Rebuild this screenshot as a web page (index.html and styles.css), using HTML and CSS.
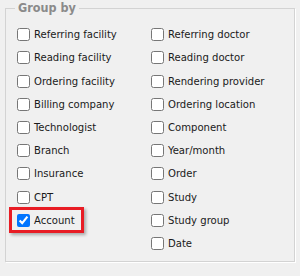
FILE: index.html
```html
<!DOCTYPE html>
<html>
<head>
<meta charset="utf-8">
<link rel="stylesheet" href="styles.css">
</head>
<body>
<fieldset class="group">
  <legend class="group-title">Group by</legend>
  <div class="options">
    <label class="opt"><input type="checkbox"><span>Referring facility</span></label>
    <label class="opt"><input type="checkbox"><span>Referring doctor</span></label>
    <label class="opt"><input type="checkbox"><span>Reading facility</span></label>
    <label class="opt"><input type="checkbox"><span>Reading doctor</span></label>
    <label class="opt"><input type="checkbox"><span>Ordering facility</span></label>
    <label class="opt"><input type="checkbox"><span>Rendering provider</span></label>
    <label class="opt"><input type="checkbox"><span>Billing company</span></label>
    <label class="opt"><input type="checkbox"><span>Ordering location</span></label>
    <label class="opt"><input type="checkbox"><span>Technologist</span></label>
    <label class="opt"><input type="checkbox"><span>Component</span></label>
    <label class="opt"><input type="checkbox"><span>Branch</span></label>
    <label class="opt"><input type="checkbox"><span>Year/month</span></label>
    <label class="opt"><input type="checkbox"><span>Insurance</span></label>
    <label class="opt"><input type="checkbox"><span>Order</span></label>
    <label class="opt"><input type="checkbox"><span>CPT</span></label>
    <label class="opt"><input type="checkbox"><span>Study</span></label>
    <label class="opt highlight"><input type="checkbox" checked><span>Account</span></label>
    <label class="opt"><input type="checkbox"><span>Study group</span></label>
    <span class="opt-empty"></span>
    <label class="opt"><input type="checkbox"><span>Date</span></label>
  </div>
</fieldset>
</body>
</html>
```

FILE: styles.css
```css
html, body {
  margin: 0;
  padding: 0;
  background: #f0f0f0;
}
body {
  width: 300px;
  height: 276px;
  font-family: "DejaVu Sans Condensed", "DejaVu Sans", sans-serif;
  font-stretch: condensed;
  font-size: 11.2px;
  color: #1a1a1a;
}
.group {
  margin: 0 5px;
  padding: 7px 10px 0 11px;
  height: 253px;
  border: 1px solid #d3d3d3;
  box-shadow: 1px 1px 0 #ffffff;
  box-sizing: content-box;
}
.group-title {
  padding: 0 3px;
  margin-left: -2px;
  line-height: 16px;
  font-size: 12.5px;
  font-weight: bold;
  color: #8a8a8a;
}
.options {
  display: grid;
  grid-template-columns: 134px 1fr;
  grid-auto-rows: 23.22px;
}
.opt {
  display: flex;
  align-items: center;
  gap: 4px;
  position: relative;
}
.opt input {
  margin: 0;
  width: 13px;
  height: 13px;
  accent-color: #0075ff;
}
.highlight::after {
  content: "";
  position: absolute;
  left: -8px;
  top: -2px;
  width: 75px;
  height: 26px;
  box-sizing: border-box;
  border: 3px solid #e81c24;
  box-shadow: 2px 2px 3px rgba(0, 0, 0, 0.3);
  pointer-events: none;
}
```
